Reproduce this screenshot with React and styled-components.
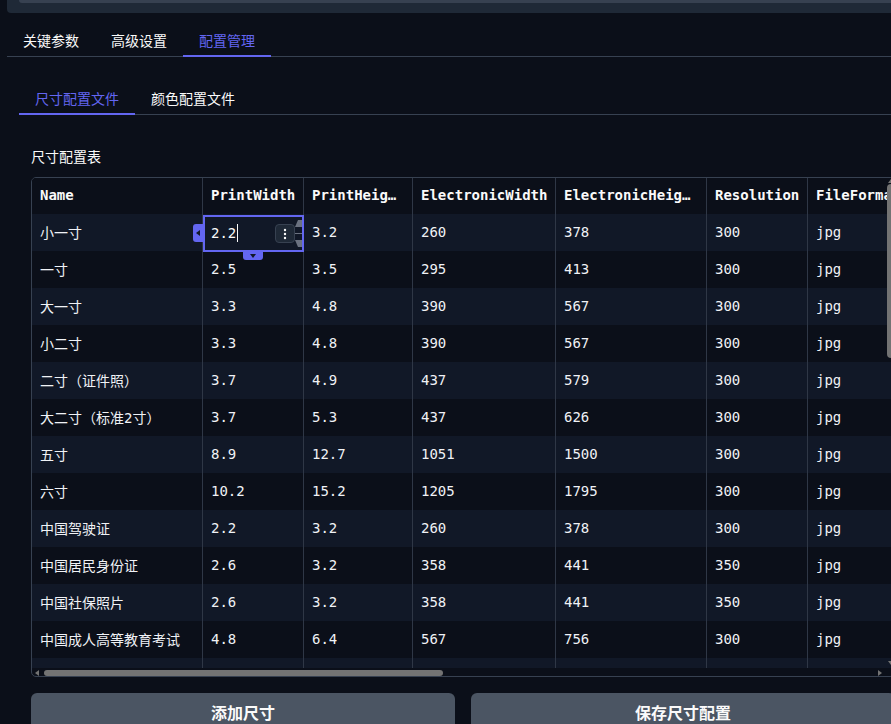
import React from "react";
import styled, { createGlobalStyle } from "styled-components";

const Global = createGlobalStyle`
  html, body { margin: 0; padding: 0; background: #0b0f19; overflow: hidden; }
  body { font-family: "Noto Sans", "Noto Sans CJK SC", sans-serif; color: #fafafa; }
  * { box-sizing: border-box; }
`;

const Page = styled.div`
  width: 940px;
  padding-left: 7px;
`;

const TopPanel = styled.div`
  height: 13px;
  background: #1f2937;
  border-bottom-left-radius: 4px;
  padding-left: 12px;
`;

const TopStrip = styled.div`
  height: 3px;
  background: #374151;
  border-bottom-left-radius: 3px;
`;

const TabBar = styled.div`
  display: flex;
  border-bottom: 1px solid #374151;
`;

const Tab = styled.div`
  padding: ${(p) => (p.$sub ? "31px" : "17px")} 16px 5px;
  line-height: 20px;
  font-size: 14px;
  color: ${(p) => (p.$active ? "#6366f1" : "#fafafa")};
  border-bottom: 2px solid ${(p) => (p.$active ? "#6366f1" : "transparent")};
  margin-bottom: -1px;
  font-family: "Noto Sans CJK SC", sans-serif;
`;

const SubPanel = styled.div`
  padding-left: 12px;
`;

const Content = styled.div`
  padding-left: 12px;
  width: 888px;
`;

const Label = styled.div`
  margin-top: 31px;
  line-height: 20px;
  font-size: 14px;
  font-family: "Noto Sans CJK SC", sans-serif;
  color: #fafafa;
`;

const TableBox = styled.div`
  position: relative;
  margin-top: 11px;
  width: 864px;
  height: 500px;
  border: 1px solid #374151;
  border-radius: 5px;
  overflow: hidden;
`;

const Viewport = styled.div`
  height: 490px;
  overflow: hidden;
`;

const Grid = styled.div`
  display: grid;
  grid-template-columns: 171px 101px 109px 143px 151px 101px 120px;
  grid-auto-rows: 37px;
  grid-template-rows: 36px;
  width: max-content;
`;

const Cell = styled.div`
  display: flex;
  align-items: center;
  padding: 0 4px 2px 8px;
  border-right: 1px solid #2f3746;
  background: ${(p) => (p.$alt ? "#111827" : "#0b0f19")};
  font-family: "DejaVu Sans Mono", "Noto Sans CJK SC", monospace;
  font-size: 14px;
  color: #f0f2f6;
  white-space: nowrap;
  overflow: hidden;
`;

const HeadCell = styled(Cell)`
  font-weight: bold;
  color: #fafafa;
  background: #0b0f19;
`;

const EditBox = styled.div`
  position: absolute;
  left: 171px;
  top: 37px;
  width: 101px;
  height: 37px;
  border: 2px solid #6366f1;
  background: #111827;
  display: flex;
  align-items: center;
  padding: 0 0 1px 6px;
  font-family: "DejaVu Sans Mono", monospace;
  font-size: 14px;
  color: #fafafa;
`;

const Caret = styled.span`
  display: inline-block;
  width: 1px;
  height: 18px;
  background: #fafafa;
  margin-left: 1px;
`;

const MenuBtn = styled.div`
  position: absolute;
  left: 70px;
  top: 7px;
  width: 20px;
  height: 19px;
  border-radius: 4px;
  background: #1f2937;
  border: 1px solid #374151;
  display: flex;
  align-items: center;
  justify-content: center;
`;

const Spinner = styled.svg`
  position: absolute;
  right: 0px;
  top: 1px;
`;

const Handle = styled.div`
  position: absolute;
  background: #6366f1;
  display: flex;
  align-items: center;
  justify-content: center;
`;

const LeftHandle = styled(Handle)`
  left: 161px;
  top: 46px;
  width: 10px;
  height: 18px;
  border-radius: 3px 0 0 3px;
`;

const BottomHandle = styled(Handle)`
  left: 211px;
  top: 73px;
  width: 20px;
  height: 9px;
  border-radius: 0 0 3px 3px;
`;

const Scroll = styled.div`
  position: absolute;
  background: #737373;
  border-radius: 4px;
`;

const HThumb = styled(Scroll)`
  left: 12px;
  top: 492px;
  width: 399px;
  height: 6px;
`;

const VThumb = styled(Scroll)`
  left: 855px;
  top: 6px;
  width: 8px;
  height: 174px;
`;

const Arrow = styled.svg`
  position: absolute;
  left: ${(p) => p.$x}px;
  top: ${(p) => p.$y}px;
`;

const Buttons = styled.div`
  display: grid;
  grid-template-columns: 424px 424px;
  gap: 16px;
  margin-top: 16px;
`;

const Button = styled.div`
  height: 40px;
  padding-bottom: 3px;
  background: #4b5563;
  border-radius: 6px;
  display: flex;
  align-items: center;
  justify-content: center;
  font-family: "Noto Sans CJK SC", sans-serif;
  font-weight: bold;
  font-size: 16px;
  color: #fafafa;
`;

const headers = ["Name", "PrintWidth", "PrintHeig…", "ElectronicWidth", "ElectronicHeig…", "Resolution", "FileFormat"];

const rows = [
  ["小一寸", "2.2", "3.2", "260", "378", "300", "jpg"],
  ["一寸", "2.5", "3.5", "295", "413", "300", "jpg"],
  ["大一寸", "3.3", "4.8", "390", "567", "300", "jpg"],
  ["小二寸", "3.3", "4.8", "390", "567", "300", "jpg"],
  ["二寸（证件照）", "3.7", "4.9", "437", "579", "300", "jpg"],
  ["大二寸（标准2寸）", "3.7", "5.3", "437", "626", "300", "jpg"],
  ["五寸", "8.9", "12.7", "1051", "1500", "300", "jpg"],
  ["六寸", "10.2", "15.2", "1205", "1795", "300", "jpg"],
  ["中国驾驶证", "2.2", "3.2", "260", "378", "300", "jpg"],
  ["中国居民身份证", "2.6", "3.2", "358", "441", "350", "jpg"],
  ["中国社保照片", "2.6", "3.2", "358", "441", "350", "jpg"],
  ["中国成人高等教育考试", "4.8", "6.4", "567", "756", "300", "jpg"],
  ["", "", "", "", "", "", ""],
];

export default function App() {
  return (
    <Page>
      <Global />
      <TopPanel>
        <TopStrip />
      </TopPanel>
      <TabBar>
        <Tab>关键参数</Tab>
        <Tab>高级设置</Tab>
        <Tab $active>配置管理</Tab>
      </TabBar>
      <SubPanel>
        <TabBar>
          <Tab $sub $active>尺寸配置文件</Tab>
          <Tab $sub>颜色配置文件</Tab>
        </TabBar>
        <Content>
          <Label>尺寸配置表</Label>
          <TableBox>
            <Viewport>
              <Grid>
                {headers.map((h) => (
                  <HeadCell key={h}>{h}</HeadCell>
                ))}
                {rows.map((r, i) =>
                  r.map((c, j) => (
                    <Cell key={i + "-" + j} $alt={i % 2 === 0}>
                      {c}
                    </Cell>
                  ))
                )}
              </Grid>
            </Viewport>
            <EditBox>
              2.2<Caret />
              <MenuBtn>
                <svg width="4" height="12" viewBox="0 0 4 12">
                  <circle cx="2" cy="2" r="1.2" fill="#fafafa" />
                  <circle cx="2" cy="6" r="1.2" fill="#fafafa" />
                  <circle cx="2" cy="10" r="1.2" fill="#fafafa" />
                </svg>
              </MenuBtn>
              <Spinner width="8" height="31" viewBox="0 0 8 31">
                <path d="M1 9 L4 2 L8 2 L8 9 Z" fill="#6b7280" />
                <rect x="1" y="15" width="7" height="1" fill="#6b7280" />
                <path d="M1 22 L8 22 L8 29 L4 29 Z" fill="#6b7280" />
              </Spinner>
            </EditBox>
            <LeftHandle>
              <svg width="4" height="6" viewBox="0 0 4 6">
                <path d="M4 0 L0 3 L4 6 Z" fill="#111827" />
              </svg>
            </LeftHandle>
            <BottomHandle>
              <svg width="6" height="4" viewBox="0 0 6 4">
                <path d="M0 0 L6 0 L3 4 Z" fill="#111827" />
              </svg>
            </BottomHandle>
            <HThumb />
            <VThumb />
            <Arrow width="4" height="6" viewBox="0 0 4 6" $x={3} $y={492}>
              <path d="M4 0 L0 3 L4 6 Z" fill="#737373" />
            </Arrow>
            <Arrow width="4" height="6" viewBox="0 0 4 6" $x={846} $y={492}>
              <path d="M0 0 L4 3 L0 6 Z" fill="#737373" />
            </Arrow>
            <Arrow width="6" height="4" viewBox="0 0 6 4" $x={856} $y={1}>
              <path d="M0 4 L3 0 L6 4 Z" fill="#737373" />
            </Arrow>
            <Arrow width="6" height="4" viewBox="0 0 6 4" $x={856} $y={483}>
              <path d="M0 0 L6 0 L3 4 Z" fill="#737373" />
            </Arrow>
          </TableBox>
          <Buttons>
            <Button>添加尺寸</Button>
            <Button>保存尺寸配置</Button>
          </Buttons>
        </Content>
      </SubPanel>
    </Page>
  );
}
